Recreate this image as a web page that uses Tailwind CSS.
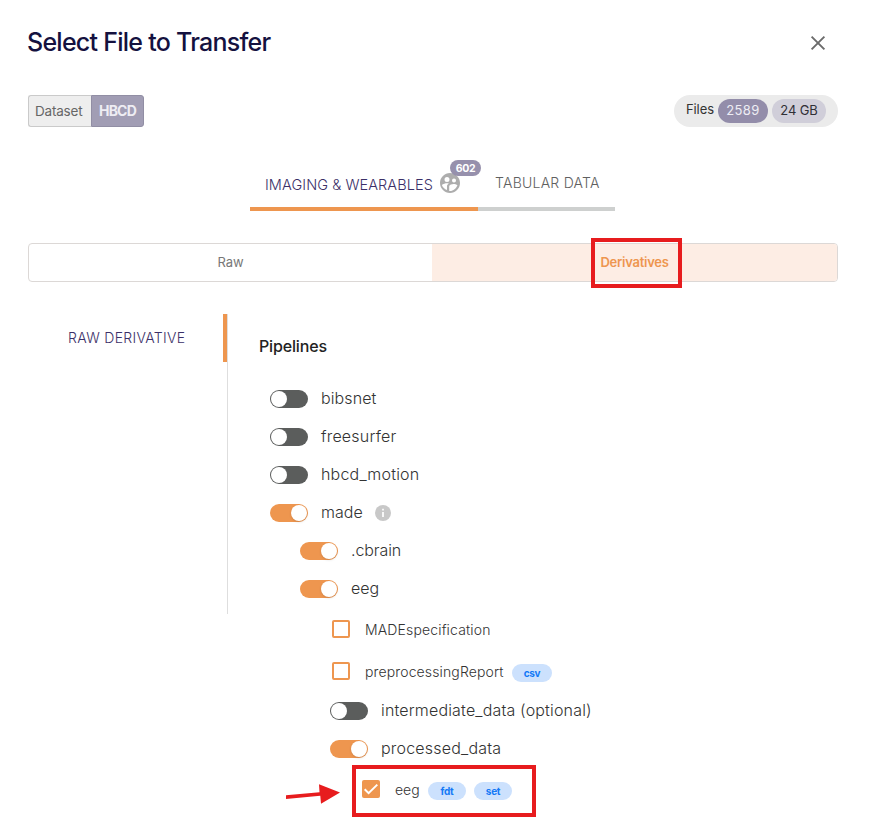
<!DOCTYPE html>
<html lang="en">
<head>
<meta charset="utf-8">
<title>Select File to Transfer</title>
<script src="https://cdn.jsdelivr.net/npm/@tailwindcss/browser@4"></script>
</head>
<body class="bg-white">
<main class="relative w-[870px] h-[818px] overflow-hidden bg-white font-['Inter','Liberation_Sans',sans-serif] text-[#333]">
  <header class="flex items-center justify-between h-[85px] pl-[27px] pr-[42px]">
    <h1 class="text-[25px] font-medium tracking-[-0.74px] text-[#14113f]">Select File to Transfer</h1>
    <svg class="size-5" viewBox="0 0 20 20" fill="none" stroke="#6b6b6b" stroke-width="1.9"><path d="M3.6 3.6 16.4 16.400M16.4 3.6 3.6 16.400"/></svg>
  </header>

  <section class="flex justify-between mt-[10px] pl-[28px] pr-[32px] h-8">
    <div class="flex w-[116px] h-8 text-[14px] leading-[30px]">
      <span class="w-[63px] pl-[6px] bg-[#eee] border border-r-0 border-[#cacaca] rounded-l-[3px] text-[13.5px] tracking-[-0.2px] text-[#666] whitespace-nowrap">Dataset</span>
      <span class="w-[53px] pl-[7px] bg-[#a19db4] border border-[#918ea4] rounded-r-[3px] font-bold tracking-[-0.8px] text-[#eeedf3]">HBCD</span>
    </div>
    <div class="flex items-center w-[164px] h-8 pl-3 rounded-full bg-[#ebebeb] text-[13px]">
      <span class="w-8 -mt-[2px] tracking-[-0.1px]">Files</span>
      <span class="w-[50px] h-6 leading-[23px] text-center rounded-full bg-[#938daa] text-[#eeedf4] tracking-[0.4px]">2589</span>
      <span class="w-[54px] h-6 ml-1 leading-[23px] text-center rounded-full bg-[#d0ced9] text-[#303036] tracking-[-0.1px]">24 GB</span>
    </div>
  </section>

  <nav class="flex ml-[250px] mt-[32px] h-[52px] text-[14px] font-light whitespace-nowrap">
    <div class="relative w-[228px] pl-[15px] pt-[16px] border-b-4 border-[#ee964f] text-[#3b3068] leading-5"><span class="text-[14.5px] tracking-[0.07px]">IMAGING &amp; WEARABLES</span>
      <svg class="absolute left-[188px] top-[12px] size-6" viewBox="0 0 24 24" fill="#adadad"><path d="M12 2C6.48 2 2 6.48 2 12s4.48 10 10 10 10-4.48 10-10S17.52 2 12 2zm4 5.500a2 2 0 1 1 0 4 2 2 0 0 1 0-4zM9 6a2.500 2.500 0 1 1 0 5 2.500 2.500 0 0 1 0-5zm0 9.200v3.750C6.600 18.200 4.700 16.340 3.900 13.960 4.950 12.840 7.570 12.270 9 12.270c.52 0 1.170.08 1.850.22C9.260 13.330 9 14.440 9 15.200zM12 20c-.27 0-.53-.01-.79-.04V15.200c0-1.420 2.940-2.130 4.400-2.130 1.070 0 2.920.39 3.840 1.150C18.280 17.190 15.380 20 12 20z"/></svg>
      <span class="absolute left-[200px] top-[1px] w-[31px] h-4 rounded-full bg-[#9690ac] text-center text-[10.500px] leading-[17px] font-bold tracking-[-0.3px] text-white">602</span>
    </div>
    <div class="w-[137px] pl-[17px] pt-[14px] border-b-4 border-[#ced0cf] text-[#606060] leading-5 tracking-[0.25px]">TABULAR DATA</div>
  </nav>

  <section class="flex ml-[28px] mt-[32px] w-[810px] h-[39px] border border-[#dcd8d6] rounded-[4px] text-[13px] leading-[37px] text-center">
    <div class="w-[403px] text-[#777]">Raw</div>
    <div class="flex-1 font-semibold tracking-[-0.25px] text-[#ee964f] bg-[#fdede4] rounded-r-[3px]">Derivatives</div>
  </section>
  <div class="absolute left-[591px] top-[238px] w-[91px] h-[50px] border-4 border-[#e71c1e]"></div>

  <section class="flex mt-8">
    <aside class="w-[228px] h-[300px] border-r border-[#dedede]">
      <div class="h-12 pl-[68px] border-r-4 border-[#ee964f] text-[14px] font-light leading-12 tracking-[0.32px] text-[#3b3068] whitespace-nowrap">RAW DERIVATIVE</div>
    </aside>
    <div class="pl-[32px] whitespace-nowrap">
      <h2 class="h-[66px] pt-5 -ml-px text-[16px] font-medium leading-6 tracking-[-0.15px] text-[#222]">Pipelines</h2>
      <ul class="pl-[10px] text-[16px] font-light">
        <li class="flex items-center gap-[13px] h-[38px]"><span class="w-[38px] h-[18px] p-px rounded-full bg-[#5b5d5c]"><i class="block size-4 rounded-full bg-white"></i></span><span class="-mt-[2px] tracking-[0.1px]">bibsnet</span></li>
        <li class="flex items-center gap-[13px] h-[38px]"><span class="w-[38px] h-[18px] p-px rounded-full bg-[#5b5d5c]"><i class="block size-4 rounded-full bg-white"></i></span><span class="-mt-[2px] tracking-[0.2px]">freesurfer</span></li>
        <li class="flex items-center gap-[13px] h-[38px]"><span class="w-[38px] h-[18px] p-px rounded-full bg-[#5b5d5c]"><i class="block size-4 rounded-full bg-white"></i></span><span class="-mt-[2px] tracking-[0.2px]">hbcd_motion</span></li>
        <li class="flex items-center gap-[13px] h-[38px]"><span class="flex justify-end w-[38px] h-[18px] p-px rounded-full bg-[#ee964f]"><i class="block size-4 rounded-full bg-white shadow-sm"></i></span><span class="w-[41px] -mt-[2px]">made</span>
          <svg class="size-4" viewBox="0 0 16 16"><circle cx="8" cy="8" r="8" fill="#c8c8c8"/><path d="M8 7v5M8 3.700v1.800" stroke="#fff" stroke-width="1.700"/></svg></li>
        <li class="flex items-center gap-[13px] h-[38px] pl-[30px]"><span class="flex justify-end w-[38px] h-[18px] p-px rounded-full bg-[#ee964f]"><i class="block size-4 rounded-full bg-white shadow-sm"></i></span><span class="-mt-[2px] tracking-[-0.1px]">.cbrain</span></li>
        <li class="flex items-center gap-[13px] h-[38px] pl-[30px]"><span class="flex justify-end w-[38px] h-[18px] p-px rounded-full bg-[#ee964f]"><i class="block size-4 rounded-full bg-white shadow-sm"></i></span><span class="-mt-[2px]">eeg</span></li>
        <li class="flex items-center h-[42px] pl-[62px] text-[14px]"><span class="size-[18px] border-2 border-[#ee964f] rounded-[2px]"></span><span class="ml-[15px] tracking-[0.15px]">MADEspecification</span></li>
        <li class="flex items-center h-[42px] pl-[62px] text-[14px]"><span class="size-[18px] border-2 border-[#ee964f] rounded-[2px]"></span><span class="w-[147px] ml-[15px] tracking-[0.13px]">preprocessingReport</span><span class="w-10 h-[18px] mt-[4px] rounded-full bg-[#cce1fd] text-center text-[10px] leading-[18px] font-bold tracking-[-0.4px] text-[#1479f6]">csv</span></li>
        <li class="flex items-center gap-[13px] h-[38px] pl-[60px]"><span class="w-[38px] h-[18px] p-px rounded-full bg-[#5b5d5c]"><i class="block size-4 rounded-full bg-white"></i></span><span class="-mt-[2px] tracking-[0.17px]">intermediate_data (optional)</span></li>
        <li class="flex items-center gap-[13px] h-[38px] pl-[60px]"><span class="flex justify-end w-[38px] h-[18px] p-px rounded-full bg-[#ee964f]"><i class="block size-4 rounded-full bg-white shadow-sm"></i></span><span class="-mt-[2px] tracking-[0.2px]">processed_data</span></li>
        <li class="flex items-center h-[42px] pl-[92px] text-[14px]"><svg class="size-[18px]" viewBox="0 0 18 18"><rect width="18" height="18" rx="2" fill="#ee964f"/><path d="m2.700 9.200 3.900 3.900L15.300 4.600" fill="none" stroke="#fff" stroke-width="2"/></svg><span class="w-[33px] ml-[15px]">eeg</span><span class="w-[38px] h-[18px] mt-[4px] rounded-full bg-[#cce1fd] text-center text-[10px] leading-[18px] font-bold tracking-[-0.3px] text-[#1479f6]">fdt</span><span class="w-[38px] h-[18px] ml-2 mt-[4px] rounded-full bg-[#cce1fd] text-center text-[10px] leading-[18px] font-bold tracking-[-0.3px] text-[#1479f6]">set</span></li>
      </ul>
    </div>
  </section>
  <div class="absolute left-[352px] top-[765px] w-[184px] h-[52px] border-4 border-[#e71c1e]"></div>
  <svg class="absolute left-[284px] top-[782px] w-[58px] h-[24px]" viewBox="0 0 58 24" fill="#e71c1e"><path d="M2 13.200 35.500 10.200 35 2.300 56 10.600 37 21.800 36.300 13.800 2 17z"/></svg>
</main>
</body>
</html>
